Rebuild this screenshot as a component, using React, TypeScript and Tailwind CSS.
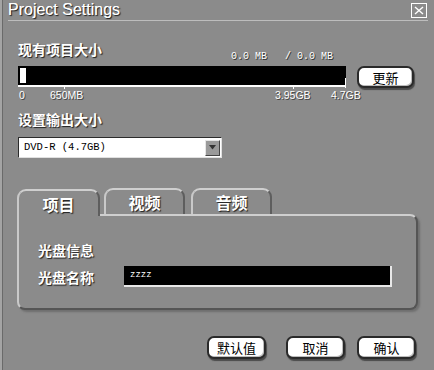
import React from "react";

const cjk = "font-['Noto_Sans_CJK_SC','Noto_Sans',sans-serif]";
const label = `${cjk} text-[14px] font-bold leading-[18px] text-white [text-shadow:1px_1px_1px_#1e1e1e]`;
const pillBtn = `${cjk} flex items-center justify-center rounded-[7px] border-2 border-[#2a2a2a] bg-white text-[13px] leading-none text-black shadow-[1px_2px_1px_#4a4a4a,inset_-1px_-1px_0_#bdbdbd]`;

function Tab({ text, active, w }: { text: string; active?: boolean; w: string }) {
  return (
    <div
      className={`${w} h-[26px] rounded-t-[9px] border-l-2 border-t-2 border-r-2 border-l-[#c9c9c9] border-t-[#cfcfcf] border-r-[#5e5e5e] bg-[#8b8b8b] flex items-center justify-center ${
        active ? "relative z-10 -mb-[2px] h-[27px]" : ""
      }`}
    >
      <span className={`${cjk} text-[16px] font-bold leading-none text-white [text-shadow:1px_1px_1px_#1e1e1e]`}>
        {text}
      </span>
    </div>
  );
}

export default function App() {
  return (
    <div className="w-[434px] h-[370px] overflow-hidden bg-[#8b8b8b] border-l-2 border-l-[#a4a4a4] shadow-[inset_1px_0_0_#6a6a6a] font-['Liberation_Sans',sans-serif]">
      {/* title bar */}
      <div className="mx-[6px] flex h-[21px] items-center justify-between border-b border-[#bdbdbd]">
        <span className="text-[16px] leading-none text-white [text-shadow:1px_1px_1px_#1a1a1a,0_0_0.4px_#fff]">
          Project Settings
        </span>
        <div className="mr-[1px] flex h-[15px] w-[16px] items-center justify-center border border-white">
          <svg width="10" height="9" viewBox="0 0 10 9">
            <path d="M1 1 L9 8 M9 1 L1 8" stroke="#fff" strokeWidth="1.4" />
          </svg>
        </div>
      </div>

      {/* current size */}
      <div className="pl-[16px] pr-[19px]">
        <div className="mt-[19px] flex items-start">
          <span className={label}>现有项目大小</span>
          <div className="ml-[129px] mt-[12px] flex gap-[18px] font-['Liberation_Mono',monospace] text-[10px] leading-[10px] text-white [text-shadow:1px_1px_0_#333]">
            <span>0.0 MB</span>
            <span>/ 0.0 MB</span>
          </div>
        </div>

        <div className="mt-[4px] flex items-start gap-[11px]">
          <div className="relative h-[21px] w-[328px] border-b-2 border-white bg-black">
            <div className="ml-[2px] mt-[2px] h-[15px] w-[6px] bg-white" />
            <div className="absolute left-[46px] top-[19px] h-[4px] w-px bg-white" />
            <div className="absolute left-[275px] top-[19px] h-[4px] w-px bg-white" />
            <div className="absolute right-0 top-[12px] h-[10px] w-px bg-white" />
          </div>
          <button className={`${pillBtn} h-[22px] w-[57px]`}>更新</button>
        </div>

        {/* scale labels */}
        <div className="relative h-[12px] text-[10.5px] leading-[12px] text-white [text-shadow:1px_1px_0_#444]">
          <span className="absolute left-[1px] top-[1px]">0</span>
          <span className="absolute left-[32px] top-[1px]">650MB</span>
          <span className="absolute left-[257px] top-[1px]">3.95GB</span>
          <span className="absolute left-[313px] top-[1px]">4.7GB</span>
        </div>

        {/* output size */}
        <div className="mt-[8px]">
          <span className={label}>设置输出大小</span>
        </div>
        <div className="mt-[5px] flex h-[21px] w-[204px] items-center justify-between border border-[#2b2b2b] border-b-[#e0e0e0] border-r-[#e0e0e0] bg-white pl-[5px] pr-[1px]">
          <span className="font-['Liberation_Mono',monospace] text-[10.5px] leading-none text-black">DVD-R (4.7GB)</span>
          <div className="flex h-[16px] w-[15px] items-center justify-center border border-[#e6e6e6] border-b-[#444] border-r-[#444] bg-[#9a9a9a]">
            <svg width="7" height="5" viewBox="0 0 7 5">
              <path d="M0 0 H7 L3.5 4.5 Z" fill="#333" />
            </svg>
          </div>
        </div>

        {/* tabs */}
        <div className="mt-[30px] -ml-[1px] flex items-end">
          <Tab text="项目" active w="w-[83px]" />
          <div className="ml-[4px]">
            <Tab text="视频" w="w-[81px]" />
          </div>
          <div className="ml-[6px]">
            <Tab text="音频" w="w-[81px]" />
          </div>
        </div>
        <div className="-ml-[1px] h-[96px] w-[401px] rounded-b-[8px] rounded-tr-[8px] border-2 border-l-[#c9c9c9] border-t-[#cfcfcf] border-r-[#555] border-b-[#555] bg-[#8b8b8b] pl-[19px] shadow-[2px_2px_2px_#6f6f6f]">
          <div className="mt-[23px]">
            <span className={label}>光盘信息</span>
          </div>
          <div className="mt-[3px] flex items-center">
            <span className={`${label} w-[86px]`}>光盘名称</span>
            <div className="flex h-[21px] w-[268px] items-center border-b-2 border-r-2 border-[#e8e8e8] bg-black pl-[6px]">
              <span className="font-['Liberation_Mono',monospace] text-[9px] leading-none text-white">zzzz</span>
            </div>
          </div>
        </div>

        {/* bottom buttons */}
        <div className="mt-[26px] flex justify-end gap-[20px]">
          <button className={`${pillBtn} h-[23px] w-[59px]`}>默认值</button>
          <div className="flex gap-[12px]">
            <button className={`${pillBtn} h-[23px] w-[59px]`}>取消</button>
            <button className={`${pillBtn} h-[23px] w-[59px] -mr-[1px]`}>确认</button>
          </div>
        </div>
      </div>
    </div>
  );
}
